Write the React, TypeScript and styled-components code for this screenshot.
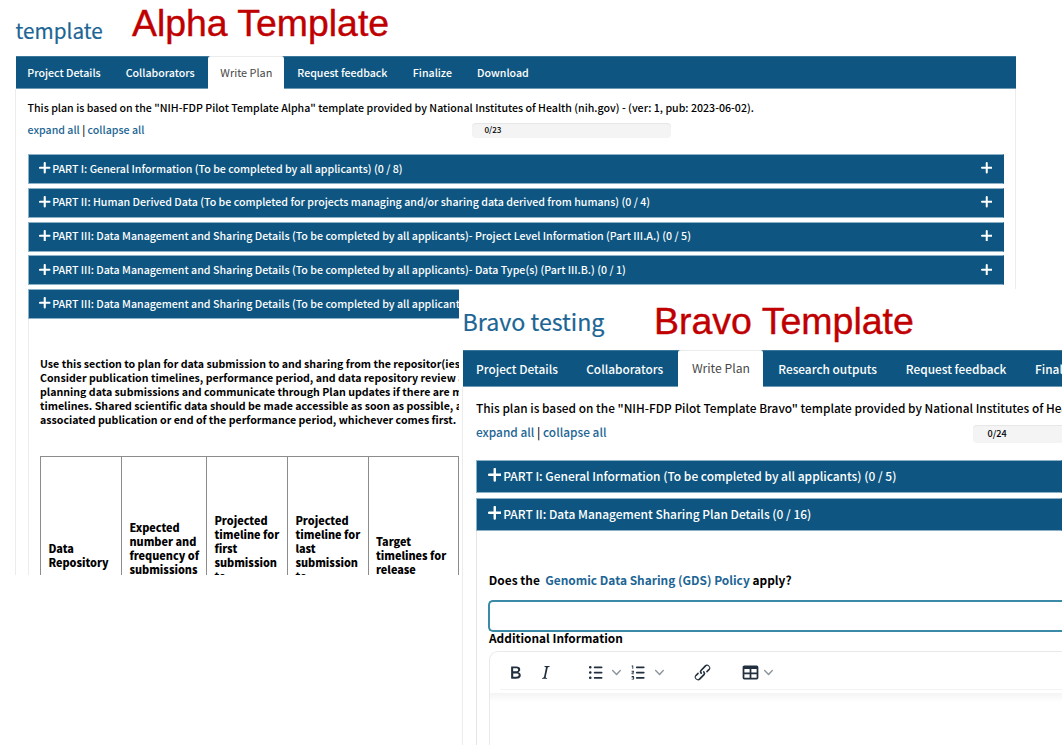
import React from 'react';
import styled, { createGlobalStyle, css } from 'styled-components';

const NAVY = '#0e5681';
const EDGE = '#8db1c7';
const LINK = '#1c6594';

const Global = createGlobalStyle`
  * { box-sizing: border-box; }
  body { margin: 0; background: #fff; }
`;

const Stage = styled.main`
  position: relative;
  width: 1062px;
  height: 745px;
  overflow: hidden;
  background: #fff;
  color: #000;
  font-family: "Noto Sans CJK SC", "Source Sans Pro", sans-serif;
  font-weight: 500;
  white-space: nowrap;
`;

const AlphaWindow = styled.section`
  display: flex;
  flex-direction: column;
  width: 1016px;
  height: 575px;
  padding-left: 15px;
  overflow: hidden;
  font-size: 10.64px;
`;

const BravoWindow = styled.section`
  position: absolute;
  left: 459px;
  top: 289px;
  display: flex;
  flex-direction: column;
  width: 603px;
  height: 456px;
  padding-left: 3px;
  overflow: hidden;
  background: #fff;
  font-size: 11.87px;
`;

const Heading = styled.header<{ $height: number }>`
  display: flex;
  flex: none;
  height: ${p => p.$height}px;
`;

const PlanName = styled.h1<{ $size: number; $width: number; $top: number }>`
  flex: none;
  width: ${p => p.$width}px;
  margin: ${p => p.$top}px 0 0;
  padding-left: 0.6px;
  font-size: ${p => p.$size}px;
  font-weight: 400;
  line-height: 30px;
  color: ${LINK};
  -webkit-text-stroke: 0.2px ${LINK};
`;

const Caption = styled.div<{ $top: number; $size: number }>`
  margin-top: ${p => p.$top}px;
  font: ${p => p.$size}px/42px "Liberation Sans", Arial, sans-serif;
  color: #c00000;
  -webkit-text-stroke: 0.4px #c00000;
`;

const TabBar = styled.nav<{ $height: number }>`
  display: flex;
  flex: none;
  height: ${p => p.$height}px;
  margin-left: 1px;
  background: ${NAVY};
  border-top: 1px solid #3c7699;
  border-bottom: 1px solid #6c9ab5;
`;

const Tab = styled.a<{ $width: number; $active?: boolean }>`
  display: flex;
  flex: none;
  align-items: center;
  justify-content: center;
  width: ${p => p.$width}px;
  color: #fff;
  ${p =>
    p.$active &&
    css`
      margin: -1px 0;
      padding-bottom: 2px;
      border-top: 1px solid #ececec;
      background: #fff;
      border-radius: 3px 3px 0 0;
      color: #484848;
      font-weight: 400;
      font-size: 1.026em;
    `}
`;

const Body = styled.div<{ $pad: string; $open?: boolean }>`
  display: flex;
  flex: 1;
  flex-direction: column;
  min-height: 0;
  padding: ${p => p.$pad};
  border: solid #ececec;
  border-width: 0 ${p => (p.$open ? 0 : 1)}px 0 1px;
`;

const Intro = styled.p`
  flex: none;
  height: 22px;
  margin: 0;
  line-height: 22px;
`;

const Controls = styled.div<{ $height: number; $left: number; $drop?: number }>`
  display: flex;
  flex: none;
  height: ${p => p.$height}px;
  line-height: 22px;

  > span:first-child {
    width: ${p => p.$left}px;
    flex: none;
    padding-top: ${p => p.$drop ?? 0}px;
  }
`;

const Link = styled.a`
  color: ${LINK};
`;

const Progress = styled.div<{ $w: number; $h: number; $size: number; $top: number }>`
  flex: none;
  width: ${p => p.$w}px;
  height: ${p => p.$h}px;
  margin-top: ${p => p.$top}px;
  padding-left: ${p => p.$size * 1.6}px;
  border-radius: 4px;
  background: #f4f4f4;
  box-shadow: inset 0 1px 1px #e6e6e6;
  font-size: ${p => p.$size}px;
  line-height: ${p => p.$h - 0.5}px;
`;

const Rows = styled.div<{ $gap: number; $size: number }>`
  display: flex;
  flex: none;
  flex-direction: column;
  gap: ${p => p.$gap}px;
  font-size: ${p => p.$size}px;
`;

const Row = styled.div<{ $height: number; $lift: number }>`
  display: flex;
  align-items: center;
  flex: none;
  height: ${p => p.$height}px;
  padding: 0 10.5px ${p => p.$lift}px 10.5px;
  background: ${NAVY};
  border: 1px solid ${EDGE};
  border-right-color: ${NAVY};
  color: #fff;
`;

const RowTitle = styled.span<{ $gap: number }>`
  flex: 1;
  margin-left: ${p => p.$gap}px;
`;

const AlphaSection = styled.div`
  flex: 1;
  padding: 38px 0 0 11.5px;
  border-left: 1px solid #ececec;
  font-size: 10.62px;
  font-weight: 700;
  line-height: 14px;
`;

const Guidance = styled.div`
  margin: 0 0 29px;
`;

const Timetable = styled.div`
  display: grid;
  grid-template-columns: 81px 85px 81px 80.5px 90px;
  width: 418.5px;
  height: 195px;
  border: solid #8c8c8c;
  border-width: 1px 0 0 1px;
  font-weight: 900;
  font-size: 10.87px;
`;

const HeadCell = styled.div<{ $top: number }>`
  padding: ${p => p.$top}px 0 0 7.4px;
  border-right: 1px solid #8c8c8c;
`;

const BravoSection = styled.div`
  display: flex;
  flex: 1;
  flex-direction: column;
  padding: 38px 0 0 11px;
  border-left: 1px solid #e6e6e6;
  font-weight: 700;
`;

const Question = styled.div`
  height: 31px;
  padding-left: 0.8px;
  line-height: 22px;
  font-size: 11.92px;
`;

const AnswerBox = styled.div`
  flex: none;
  height: 32px;
  border: 2px solid #3b8aa8;
  border-right: 0;
  border-radius: 5px 0 0 5px;
`;

const FieldLabel = styled.div`
  flex: none;
  height: 19px;
  padding-left: 1px;
  line-height: 12px;
`;

const Editor = styled.div`
  display: flex;
  flex: 1;
  flex-direction: column;
  margin-left: 1px;
  border: 1px solid #e9e9e9;
  border-width: 1px 0 0 1px;
  border-radius: 9px 0 0 0;
`;

const EditorBar = styled.div`
  display: flex;
  align-items: center;
  flex: none;
  height: 38px;
  margin-left: 10px;
  border-bottom: 1px solid #f3f3f3;
  padding: 4px 0 0 4.5px;
  color: #222f3e;
`;

const EditorShade = styled.div`
  height: 9px;
  margin-top: 3px;
  background: linear-gradient(#f4f4f4, #fff);
`;

const ToolIcon = styled.svg<{ $before?: number }>`
  flex: none;
  width: 21px;
  height: 21px;
  margin-left: ${p => p.$before ?? 0}px;
  fill: currentColor;
  fill-rule: evenodd;
`;

const Caret = styled.svg<{ $before: number }>`
  flex: none;
  width: 9px;
  height: 9px;
  margin-left: ${p => p.$before}px;
  fill: #8b939b;
`;

const PlusSvg = styled.svg`
  flex: none;
  display: block;
`;

function Plus({ size, weight = 2.1 }: { size: number; weight?: number }) {
  return (
    <PlusSvg width={size} height={size} viewBox={`0 0 ${size} ${size}`}>
      <path
        d={`M${size / 2} 1V${size - 1}M1 ${size / 2}H${size - 1}`}
        stroke="#fff"
        strokeWidth={weight}
        strokeLinecap="round"
      />
    </PlusSvg>
  );
}

function Chevron({ before }: { before: number }) {
  return (
    <Caret $before={before} viewBox="0 0 10 10">
      <path d="M8.7 2.2c.3-.3.8-.3 1 0 .4.4.4.9 0 1.2L5.7 7.8c-.3.3-.9.3-1.2 0L.2 3.4a.8.8 0 0 1 0-1.2c.3-.3.8-.3 1.1 0L5 6l3.7-3.8Z" />
    </Caret>
  );
}

const alphaTabs: [string, number][] = [
  ['Project Details', 96],
  ['Collaborators', 96.4],
  ['Write Plan', 76],
  ['Request feedback', 116],
  ['Finalize', 64],
  ['Download', 77],
];

const bravoTabs: [string, number][] = [
  ['Project Details', 108],
  ['Collaborators', 107.4],
  ['Write Plan', 85],
  ['Research outputs', 128.5],
  ['Request feedback', 128.5],
  ['Finalize', 73],
];

const alphaRows = [
  'PART I: General Information (To be completed by all applicants) (0 / 8)',
  'PART II: Human Derived Data (To be completed for projects managing and/or sharing data derived from humans) (0 / 4)',
  'PART III: Data Management and Sharing Details (To be completed by all applicants)- Project Level Information (Part III.A.) (0 / 5)',
  'PART III: Data Management and Sharing Details (To be completed by all applicants)- Data Type(s) (Part III.B.) (0 / 1)',
  'PART III: Data Management and Sharing Details (To be completed by all applicants)',
];

const bravoRows = [
  'PART I: General Information (To be completed by all applicants) (0 / 5)',
  'PART II: Data Management Sharing Plan Details (0 / 16)',
];

const guidance = [
  'Use this section to plan for data submission to and sharing from the repositor(ies)',
  'Consider publication timelines, performance period, and data repository review and',
  'planning data submissions and communicate through Plan updates if there are major',
  'timelines. Shared scientific data should be made accessible as soon as possible, and',
  'associated publication or end of the performance period, whichever comes first.',
];

const columns: { lines: string[]; top: number }[] = [
  { lines: ['Data', 'Repository'], top: 84 },
  { lines: ['Expected', 'number and', 'frequency of', 'submissions'], top: 63 },
  { lines: ['Projected', 'timeline for', 'first', 'submission', 'to'], top: 56 },
  { lines: ['Projected', 'timeline for', 'last', 'submission', 'to'], top: 56 },
  { lines: ['Target', 'timelines for', 'release'], top: 77 },
];

const lines = (items: string[]) => items.map((text, i) => <div key={i}>{text}</div>);

function Tabs({ items, height }: { items: [string, number][]; height: number }) {
  return (
    <TabBar $height={height}>
      {items.map(([label, width]) => (
        <Tab key={label} $width={width} $active={label === 'Write Plan'}>
          {label}
        </Tab>
      ))}
    </TabBar>
  );
}

function AlphaPlan() {
  return (
    <AlphaWindow>
      <Heading $height={56}>
        <PlanName $size={20.7} $width={117} $top={15}>template</PlanName>
        <Caption $top={2} $size={37.4}>Alpha Template</Caption>
      </Heading>
      <Tabs items={alphaTabs} height={33} />
      <Body $pad="8px 11.5px 0 11.5px">
        <Intro>
          This plan is based on the "NIH-FDP Pilot Template Alpha" template provided by National Institutes of Health
          (nih.gov) - (ver: 1, pub: 2023-06-02).
        </Intro>
        <Controls $height={35} $left={444}>
          <span>
            <Link>expand all</Link> | <Link>collapse all</Link>
          </span>
          <Progress $w={199} $h={15} $size={8.1} $top={4}>0/23</Progress>
        </Controls>
        <Rows $gap={3.8} $size={10.65}>
          {alphaRows.map((title, i) => (
            <Row key={i} $height={30} $lift={2}>
              <Plus size={11.5} />
              <RowTitle $gap={1.7}>{title}</RowTitle>
              <Plus size={11.5} weight={2} />
            </Row>
          ))}
        </Rows>
        <AlphaSection>
          <Guidance>{lines(guidance)}</Guidance>
          <Timetable>
            {columns.map((column, i) => (
              <HeadCell key={i} $top={column.top}>{lines(column.lines)}</HeadCell>
            ))}
          </Timetable>
        </AlphaSection>
      </Body>
    </AlphaWindow>
  );
}

function BravoPlan() {
  return (
    <BravoWindow>
      <Heading $height={61}>
        <PlanName $size={23.2} $width={192} $top={17}>Bravo testing</PlanName>
        <Caption $top={11} $size={37.5}>Bravo Template</Caption>
      </Heading>
      <Tabs items={bravoTabs} height={37} />
      <Body $pad="10px 0 0 13px" $open>
        <Intro>This plan is based on the "NIH-FDP Pilot Template Bravo" template provided by National Institutes of Health</Intro>
        <Controls $height={41} $left={497} $drop={2}>
          <span>
            <Link>expand all</Link> | <Link>collapse all</Link>
          </span>
          <Progress $w={220} $h={18} $size={9.1} $top={6}>0/24</Progress>
        </Controls>
        <Rows $gap={5} $size={11.95}>
          {bravoRows.map(title => (
            <Row key={title} $height={33} $lift={3}>
              <Plus size={13.5} weight={2.4} />
              <RowTitle $gap={2.3}>{title}</RowTitle>
            </Row>
          ))}
        </Rows>
        <BravoSection>
          <Question>
            Does the&nbsp; <Link>Genomic Data Sharing (GDS) Policy</Link> apply?
          </Question>
          <AnswerBox />
          <FieldLabel>Additional Information</FieldLabel>
          <Editor>
            <EditorBar>
              <ToolIcon viewBox="0 0 24 24">
                <path d="M7.8 19c-.3 0-.5 0-.6-.2l-.2-.5V5.7c0-.2 0-.4.2-.5l.6-.2h5c1.5 0 2.7.3 3.5 1 .7.6 1.1 1.4 1.1 2.5a3 3 0 0 1-.6 1.9c-.4.6-1 1-1.6 1.2.4.1.9.3 1.3.6s.8.7 1 1.2c.4.4.5 1 .5 1.6 0 1.3-.4 2.3-1.3 3-.8.7-2.1 1-3.8 1H7.8Zm5-8.3c.6 0 1.2-.1 1.6-.5.4-.3.6-.7.6-1.3 0-1.1-.8-1.7-2.3-1.7H9.3v3.5h3.4Zm.5 6c.7 0 1.3-.1 1.7-.4.4-.4.6-.9.6-1.5s-.2-1-.7-1.4c-.4-.3-1-.4-2-.4H9.4v3.8h4Z" />
              </ToolIcon>
              <ToolIcon $before={9.3} viewBox="0 0 24 24">
                <path d="m16.7 4.7-.1.9h-.3c-.6 0-1 0-1.4.3-.3.3-.4.6-.5 1.1l-2.1 9.8v.6c0 .5.4.8 1.4.8h.2l-.2.8H8l.2-.8h.2c1.1 0 1.8-.5 2-1.5l2-9.8.1-.5c0-.6-.4-.8-1.4-.8h-.3l.2-.9h5.8Z" />
              </ToolIcon>
              <ToolIcon $before={29} viewBox="0 0 24 24">
                <path d="M11 5h8c.6 0 1 .4 1 1s-.4 1-1 1h-8a1 1 0 0 1 0-2Zm0 6h8c.6 0 1 .4 1 1s-.4 1-1 1h-8a1 1 0 0 1 0-2Zm0 6h8c.6 0 1 .4 1 1s-.4 1-1 1h-8a1 1 0 0 1 0-2ZM4.5 6c0-.4.1-.8.4-1 .3-.4.7-.5 1.1-.5.4 0 .8.1 1 .4.4.3.5.7.5 1.1 0 .4-.1.8-.4 1-.3.4-.7.5-1.1.5-.4 0-.8-.1-1-.4-.4-.3-.5-.7-.5-1.1Zm0 6c0-.4.1-.8.4-1 .3-.4.7-.5 1.1-.5.4 0 .8.1 1 .4.4.3.5.7.5 1.1 0 .4-.1.8-.4 1-.3.4-.7.5-1.1.5-.4 0-.8-.1-1-.4-.4-.3-.5-.7-.5-1.1Zm0 6c0-.4.1-.8.4-1 .3-.4.7-.5 1.1-.5.4 0 .8.1 1 .4.4.3.5.7.5 1.1 0 .4-.1.8-.4 1-.3.4-.7.5-1.1.5-.4 0-.8-.1-1-.4-.4-.3-.5-.7-.5-1.1Z" />
              </ToolIcon>
              <Chevron before={6} />
              <ToolIcon $before={7} viewBox="0 0 24 24">
                <path d="M10 17h8c.6 0 1 .4 1 1s-.4 1-1 1h-8a1 1 0 0 1 0-2Zm0-6h8c.6 0 1 .4 1 1s-.4 1-1 1h-8a1 1 0 0 1 0-2Zm0-6h8c.6 0 1 .4 1 1s-.4 1-1 1h-8a1 1 0 1 1 0-2ZM6 4v3.5c0 .3-.2.5-.5.5a.5.5 0 0 1-.5-.5V5h-.5a.5.5 0 0 1 0-1H6Zm-1 8.8.2.2h1.3c.3 0 .5.2.5.5s-.2.5-.5.5H4.9a1 1 0 0 1-.9-1V13c0-.4.3-.8.6-1l1.2-.4.2-.3a.2.2 0 0 0-.2-.2H4.5a.5.5 0 0 1-.5-.5c0-.3.2-.5.5-.5h1.6c.5 0 .9.4.9 1v.1c0 .4-.3.8-.6 1l-1.2.4-.2.3ZM7 17v2c0 .6-.4 1-1 1H4.5a.5.5 0 0 1 0-1h1.2c.2 0 .3-.1.3-.3 0-.2-.1-.3-.3-.3H4.4a.4.4 0 1 1 0-.8h1.3c.2 0 .3-.1.3-.3 0-.2-.1-.3-.3-.3H4.5a.5.5 0 1 1 0-1H6c.6 0 1 .4 1 1Z" />
              </ToolIcon>
              <Chevron before={6} />
              <ToolIcon $before={27.8} viewBox="0 0 24 24">
                <path d="M6.2 12.3a1 1 0 0 1 1.4 1.4l-2 2a2 2 0 1 0 2.6 2.8l4.8-4.8a1 1 0 0 0 0-1.4 1 1 0 1 1 1.4-1.3 2.9 2.9 0 0 1 0 4L9.6 20a3.9 3.9 0 0 1-5.5-5.5l2-2Zm11.6-.6a1 1 0 0 1-1.4-1.4l2-2a2 2 0 1 0-2.6-2.8L11 10.3a1 1 0 0 0 0 1.4A1 1 0 1 1 9.6 13a2.9 2.9 0 0 1 0-4L14.4 4a3.9 3.9 0 0 1 5.5 5.5l-2 2Z" />
              </ToolIcon>
              <ToolIcon $before={27.9} viewBox="0 0 24 24">
                <path d="M19 4a2 2 0 0 1 2 2v12a2 2 0 0 1-2 2H5a2 2 0 0 1-2-2V6c0-1.1.9-2 2-2h14ZM5 14v4h6v-4H5Zm14 0h-6v4h6v-4Zm0-6h-6v4h6V8ZM5 12h6V8H5v4Z" />
              </ToolIcon>
              <Chevron before={2.5} />
            </EditorBar>
            <EditorShade />
          </Editor>
        </BravoSection>
      </Body>
    </BravoWindow>
  );
}

export default function App() {
  return (
    <>
      <Global />
      <Stage>
        <AlphaPlan />
        <BravoPlan />
      </Stage>
    </>
  );
}
